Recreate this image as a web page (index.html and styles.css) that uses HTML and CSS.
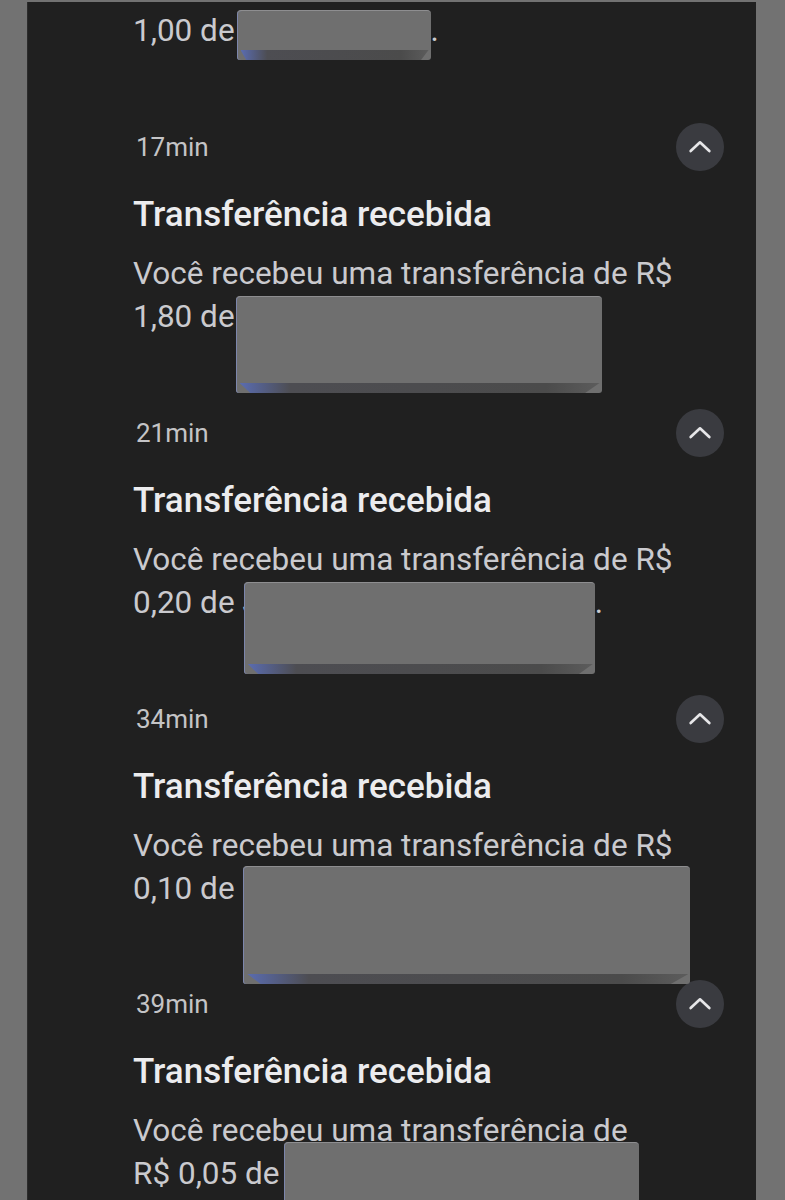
FILE: index.html
```html
<!DOCTYPE html>
<html lang="pt-BR">
<head>
    <meta charset="UTF-8">
    <meta name="viewport" content="width=device-width, initial-scale=1.0">
    <link rel="stylesheet" href="styles.css">
</head>
<body>

    <div class="panel">
        <div class="note note-cut">
            <p class="note-body">1,00 de<span class="redact r1"></span>.</p>
        </div>

        <div class="note">
            <div class="note-head">
                <span class="note-time">17min</span>
                <button class="collapse"><svg viewBox="0 0 24 24"><polyline points="4,15.5 12,8 20,15.5"/></svg></button>
            </div>
            <h2 class="note-title">Transferência recebida</h2>
            <p class="note-body">Você recebeu uma transferência de R$<br>1,80 de<span class="redact r2"></span></p>
        </div>

        <div class="note">
            <div class="note-head">
                <span class="note-time">21min</span>
                <button class="collapse"><svg viewBox="0 0 24 24"><polyline points="4,15.5 12,8 20,15.5"/></svg></button>
            </div>
            <h2 class="note-title">Transferência recebida</h2>
            <p class="note-body">Você recebeu uma transferência de R$<br>0,20 de J<span class="redact r3"></span>.</p>
        </div>

        <div class="note">
            <div class="note-head">
                <span class="note-time">34min</span>
                <button class="collapse"><svg viewBox="0 0 24 24"><polyline points="4,15.5 12,8 20,15.5"/></svg></button>
            </div>
            <h2 class="note-title">Transferência recebida</h2>
            <p class="note-body">Você recebeu uma transferência de R$<br>0,10 de <span class="redact r4"></span></p>
        </div>

        <div class="note">
            <div class="note-head">
                <span class="note-time">39min</span>
                <button class="collapse"><svg viewBox="0 0 24 24"><polyline points="4,15.5 12,8 20,15.5"/></svg></button>
            </div>
            <h2 class="note-title">Transferência recebida</h2>
            <p class="note-body">Você recebeu uma transferência de<br>R$ 0,05 de <span class="redact r5"></span></p>
        </div>
    </div>

</body>
</html>
```

FILE: styles.css
```css
body {
    margin: 0;
    background-color: #727272;
    font-family: Roboto, "Noto Sans", sans-serif;
    overflow: hidden;
}
.panel {
    margin: 2px 29px 0 28px;
    height: 1198px;
    overflow: hidden;
    background-color: #202020;
    padding: 7px 32px 0 105px;
    box-shadow: -1px 0 0 #2c2c2c;
}
.note {
    padding-bottom: 70px;
}
.note-head {
    display: flex;
    align-items: center;
    justify-content: space-between;
    height: 48px;
}
.note-time {
    padding-left: 3px;
    font-size: 26px;
    color: #c4c4c6;
}
.collapse {
    width: 48px;
    height: 48px;
    padding: 0;
    border: none;
    border-radius: 50%;
    background-color: #3a3b40;
    display: flex;
    align-items: center;
    justify-content: center;
}
.collapse svg {
    width: 28px;
    height: 28px;
    fill: none;
    stroke: #e6e6e8;
    stroke-width: 2.3;
    stroke-linecap: round;
    stroke-linejoin: round;
}
.note-title {
    margin: 24px 0 0;
    font-size: 35px;
    line-height: 40px;
    font-weight: 500;
    color: #ececee;
}
.note-body {
    margin: 17px 0 0;
    font-size: 31.5px;
    line-height: 43px;
    color: #cacace;
}
.note-cut .note-body {
    margin-top: 0;
}
.redact {
    display: inline-block;
    vertical-align: top;
    position: relative;
    margin-top: 1px;
    box-sizing: border-box;
    background-color: #6f6f6f;
    border-top: 1px solid #8e8e90;
    border-radius: 4px 4px 3px 3px;
    box-shadow: inset 1px 0 0 #7c86ac;
}
.redact::after {
    content: "";
    position: absolute;
    left: 4px;
    right: 2px;
    bottom: 0;
    height: 10px;
    background: linear-gradient(90deg, #5a6cb0, #4d4d52 14%, #4b4b4b 85%, #5c5c5c);
    clip-path: polygon(0 0, 100% 0, 96% 100%, 3% 100%);
}
.r1 {
    width: 194px;
    height: 50px;
    margin-bottom: -7px;
    margin-left: 2px;
}
.r2 {
    width: 366px;
    height: 97px;
    margin-bottom: -54px;
    margin-left: 1px;
}
.r3 {
    width: 351px;
    height: 92px;
    margin-bottom: -49px;
    margin-left: -16px;
}
.r4 {
    width: 447px;
    height: 118px;
    margin-bottom: -75px;
    margin-top: -1px;
    margin-left: 1px;
}
.r5 {
    width: 355px;
    height: 110px;
    margin-top: -10px;
    margin-bottom: -67px;
    margin-left: -3px;
}
```
